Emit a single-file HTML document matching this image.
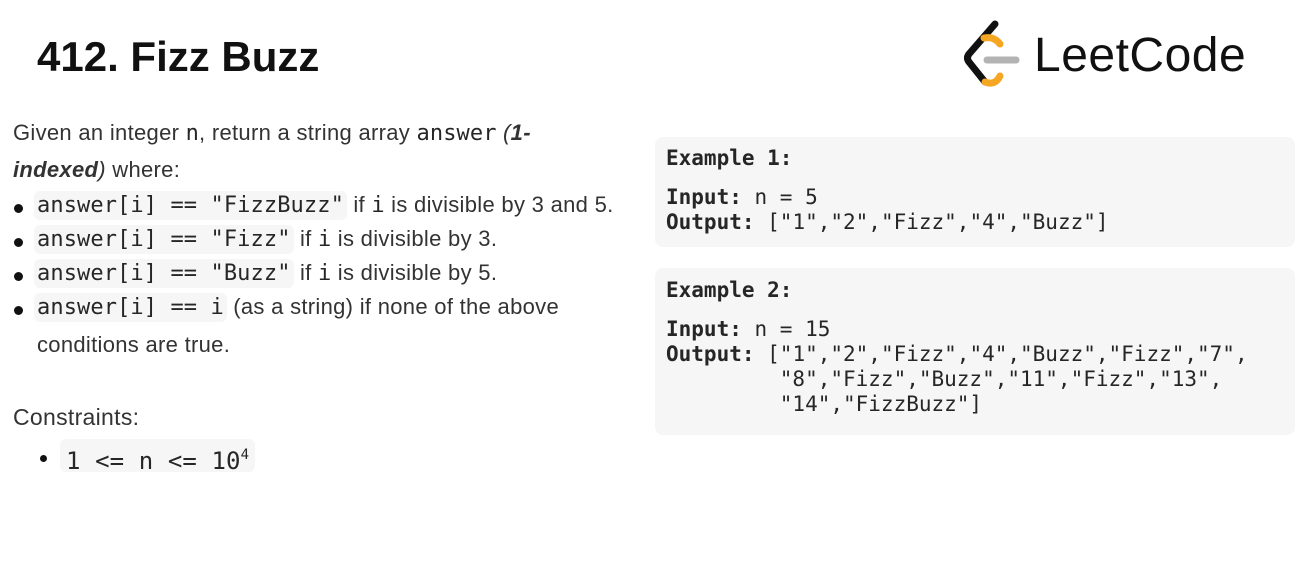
<!DOCTYPE html>
<html><head><meta charset="utf-8"><style>
body{margin:0;width:1305px;height:566px;background:#fff;position:relative;overflow:hidden;font-family:"Liberation Sans",sans-serif;color:#262626}
.a{position:absolute;white-space:nowrap}
.t{font-size:22px;letter-spacing:0.3px;color:#333}
code{font-family:"DejaVu Sans Mono",monospace;font-size:22px;color:#262626;letter-spacing:0.1px}
.c{background:#f6f6f6;border-radius:6px;padding:2px 3px}
.box{position:absolute;left:655px;width:640px;background:#f6f6f6;border-radius:8px}
.l{position:absolute;left:11px;margin:0;font-family:"DejaVu Sans Mono",monospace;font-size:21px;line-height:25px;color:#262626;white-space:pre}
b{font-weight:bold}
.dot{position:absolute;width:9px;height:9px;border-radius:50%;background:#111}
</style></head><body>
<div class="a" style="left:37px;top:33px;font-size:42px;font-weight:bold;color:#111">412. Fizz Buzz</div>
<svg class="a" style="left:960px;top:18px" width="62" height="72" viewBox="0 0 62 72">
<path d="M35 6 L9 36 Q6 40 9 44 L25 64" stroke="#111" stroke-width="7" fill="none" stroke-linecap="round" stroke-linejoin="round"/>
<path d="M24 20 Q34 18 40 26" stroke="#f5a623" stroke-width="7" fill="none" stroke-linecap="round"/>
<path d="M25 64 Q35 68 40 58" stroke="#f5a623" stroke-width="7" fill="none" stroke-linecap="round"/>
<path d="M27 42 L56 42" stroke="#b3b3b3" stroke-width="7" stroke-linecap="round"/>
</svg>
<div class="a" style="left:1034px;top:28px;font-size:48px;color:#111;letter-spacing:0.5px">LeetCode</div>

<div class="a t" style="left:13px;top:120px">Given an integer <code>n</code>, return a string array <code>answer</code> <i>(<b>1-</b></i></div>
<div class="a t" style="left:13px;top:157px"><i><b>indexed</b>)</i> where:</div>
<div class="dot" style="left:14px;top:204px"></div>
<div class="a t" style="left:34px;top:192px"><code class="c">answer[i] == "FizzBuzz"</code> if <code>i</code> is divisible by 3 and 5.</div>
<div class="dot" style="left:14px;top:238px"></div>
<div class="a t" style="left:34px;top:226px"><code class="c">answer[i] == "Fizz"</code> if <code>i</code> is divisible by 3.</div>
<div class="dot" style="left:14px;top:272px"></div>
<div class="a t" style="left:34px;top:260px"><code class="c">answer[i] == "Buzz"</code> if <code>i</code> is divisible by 5.</div>
<div class="dot" style="left:14px;top:306px"></div>
<div class="a t" style="left:34px;top:294px"><code class="c">answer[i] == i</code> (as a string) if none of the above</div>
<div class="a t" style="left:37px;top:332px">conditions are true.</div>

<div class="a t" style="left:13px;top:404px;font-size:23px">Constraints:</div>
<div class="dot" style="left:40px;top:455px;width:7px;height:7px"></div>
<div class="a" style="left:60px;top:439px;background:#f6f6f6;border-radius:6px;padding:0 6px;height:33px;line-height:33px"><code style="font-size:24px">1 &lt;= n &lt;= 10<sup style="font-size:14px;vertical-align:10px">4</sup></code></div>

<div class="box" style="top:137px;height:110px">
<div class="l" style="top:9px"><b>Example 1:</b></div>
<div class="l" style="top:48px"><b>Input:</b> n = 5</div>
<div class="l" style="top:73px"><b>Output:</b> ["1","2","Fizz","4","Buzz"]</div>
</div>
<div class="box" style="top:268px;height:167px">
<div class="l" style="top:10px"><b>Example 2:</b></div>
<div class="l" style="top:49px"><b>Input:</b> n = 15</div>
<div class="l" style="top:74px"><b>Output:</b> ["1","2","Fizz","4","Buzz","Fizz","7",
         "8","Fizz","Buzz","11","Fizz","13",
         "14","FizzBuzz"]</div>
</div>
</body></html>
